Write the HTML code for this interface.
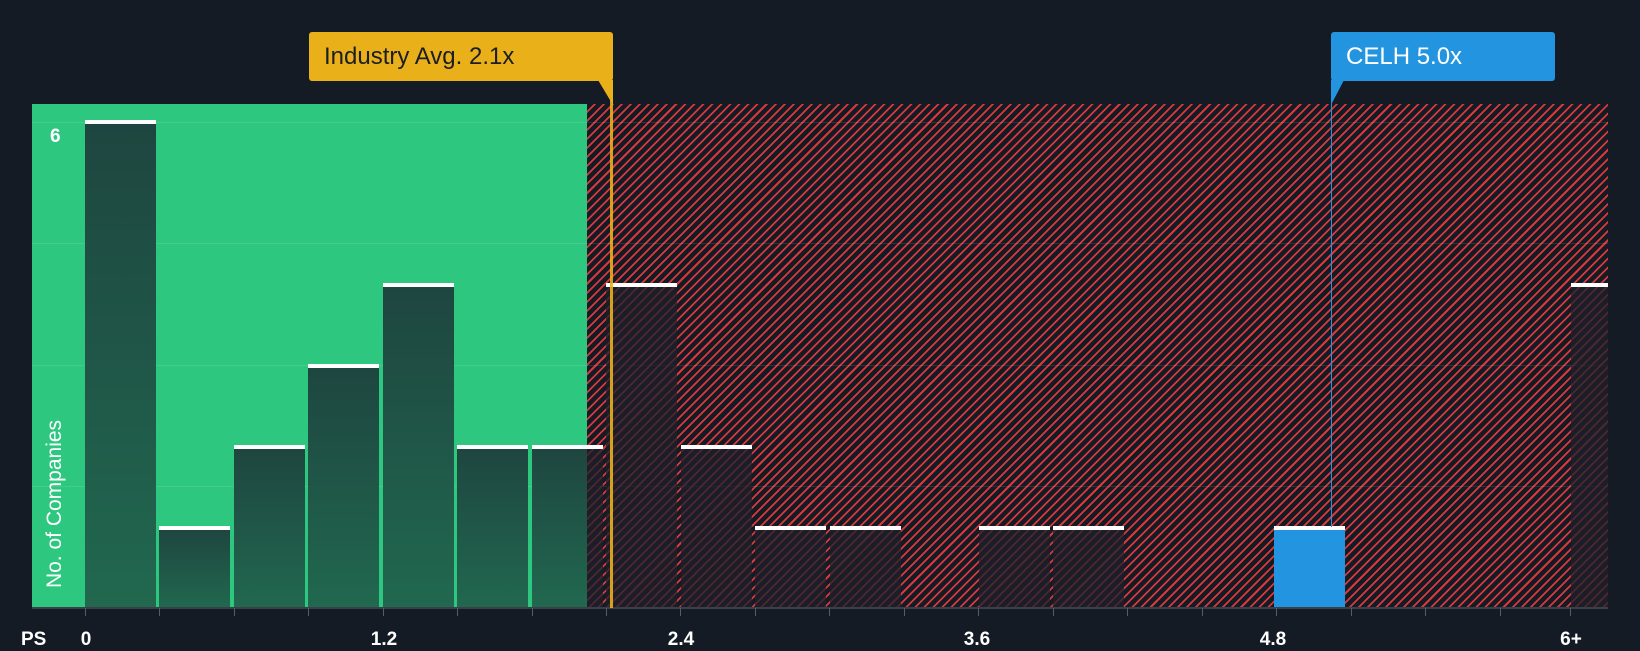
<!DOCTYPE html>
<html><head><meta charset="utf-8"><style>
body{margin:0;width:1640px;height:650px;background:#151b24;overflow:hidden;position:relative;font-family:"Liberation Sans",sans-serif}
.abs{position:absolute}
.green{left:32px;top:104px;width:555px;height:504px;background:#2ec77f}
.red{left:587px;top:104px;width:1021px;height:504px;background:repeating-linear-gradient(135deg,#151b24 0 4.6px,#d9383c 4.6px 6.4px)}
.grid{height:1px;left:32px;width:1576px;background:rgba(255,255,255,0.1)}
.bar{position:absolute;width:71px;border-top:4px solid #fff;box-sizing:border-box}
.g{background:linear-gradient(#1e4640,#21684f)}
.r{background:rgba(30,32,42,0.75)}
.tick{position:absolute;top:608px;width:1px;height:8px;background:#555c66}
.lab{position:absolute;top:629px;color:#fff;font-weight:bold;font-size:19px;transform:translateX(-50%)}
.box{position:absolute;top:32px;height:49px;border-radius:3px;font-size:24px;line-height:49px;padding-left:15px;box-sizing:border-box}
</style></head><body>
<div class="abs green"></div>
<div class="abs red"></div>
<div class="abs grid" style="top:122px"></div>
<div class="abs grid" style="top:243px"></div>
<div class="abs grid" style="top:365px"></div>
<div class="abs grid" style="top:486px"></div>

<div class="bar g" style="left:85px;top:120px;height:488px"></div>
<div class="bar g" style="left:159px;top:526px;height:82px"></div>
<div class="bar g" style="left:234px;top:445px;height:163px"></div>
<div class="bar g" style="left:308px;top:364px;height:244px"></div>
<div class="bar g" style="left:383px;top:283px;height:325px"></div>
<div class="bar g" style="left:457px;top:445px;height:163px"></div>
<div class="bar g" style="left:532px;top:445px;height:163px;width:55px"></div>
<div class="bar r" style="left:587px;top:445px;height:163px;width:16px"></div>
<div class="bar r" style="left:606px;top:283px;height:325px"></div>
<div class="bar r" style="left:681px;top:445px;height:163px"></div>
<div class="bar r" style="left:755px;top:526px;height:82px"></div>
<div class="bar r" style="left:830px;top:526px;height:82px"></div>
<div class="bar r" style="left:979px;top:526px;height:82px"></div>
<div class="bar r" style="left:1053px;top:526px;height:82px"></div>
<div class="bar" style="left:1274px;top:526px;height:82px;background:#2394e0"></div>
<div class="bar r" style="left:1571px;top:283px;height:325px;width:37px"></div>

<div class="abs" style="left:32px;top:607px;width:1576px;height:2px;background:#3a4049"></div>
<div class="tick" style="left:85px"></div><div class="tick" style="left:159px"></div><div class="tick" style="left:234px"></div><div class="tick" style="left:308px"></div><div class="tick" style="left:383px"></div><div class="tick" style="left:457px"></div><div class="tick" style="left:532px"></div><div class="tick" style="left:606px"></div><div class="tick" style="left:680px"></div><div class="tick" style="left:755px"></div><div class="tick" style="left:829px"></div><div class="tick" style="left:904px"></div><div class="tick" style="left:978px"></div><div class="tick" style="left:1053px"></div><div class="tick" style="left:1127px"></div><div class="tick" style="left:1202px"></div><div class="tick" style="left:1276px"></div><div class="tick" style="left:1351px"></div><div class="tick" style="left:1425px"></div><div class="tick" style="left:1500px"></div><div class="tick" style="left:1570px"></div>

<div class="abs" style="left:21px;top:629px;color:#fff;font-weight:bold;font-size:19px">PS</div>
<div class="lab" style="left:86px">0</div>
<div class="lab" style="left:384px">1.2</div>
<div class="lab" style="left:681px">2.4</div>
<div class="lab" style="left:977px">3.6</div>
<div class="lab" style="left:1273px">4.8</div>
<div class="lab" style="left:1571px">6+</div>

<div class="abs" style="left:50px;top:126px;color:#fff;font-weight:bold;font-size:19px">6</div>
<div class="abs" style="left:55px;top:504px;color:#fff;font-size:21px;transform:translate(-50%,-50%) rotate(-90deg);white-space:nowrap">No. of Companies</div>

<div class="abs" style="left:610px;top:81px;width:3px;height:527px;background:#eab01a;opacity:.9"></div>
<div class="box" style="left:309px;width:304px;background:#eab01a;color:#1b1e24">Industry Avg. 2.1x</div>
<svg class="abs" style="left:598px;top:80px" width="16" height="26"><polygon points="0,0 15,0 15,25" fill="#eab01a"/></svg>

<div class="abs" style="left:1331px;top:81px;width:1px;height:446px;background:#2394e0"></div>
<div class="box" style="left:1331px;width:224px;background:#2394e0;color:#fff">CELH 5.0x</div>
<svg class="abs" style="left:1331px;top:80px" width="14" height="26"><polygon points="0,0 13,0 0,25" fill="#2394e0"/></svg>
</body></html>
